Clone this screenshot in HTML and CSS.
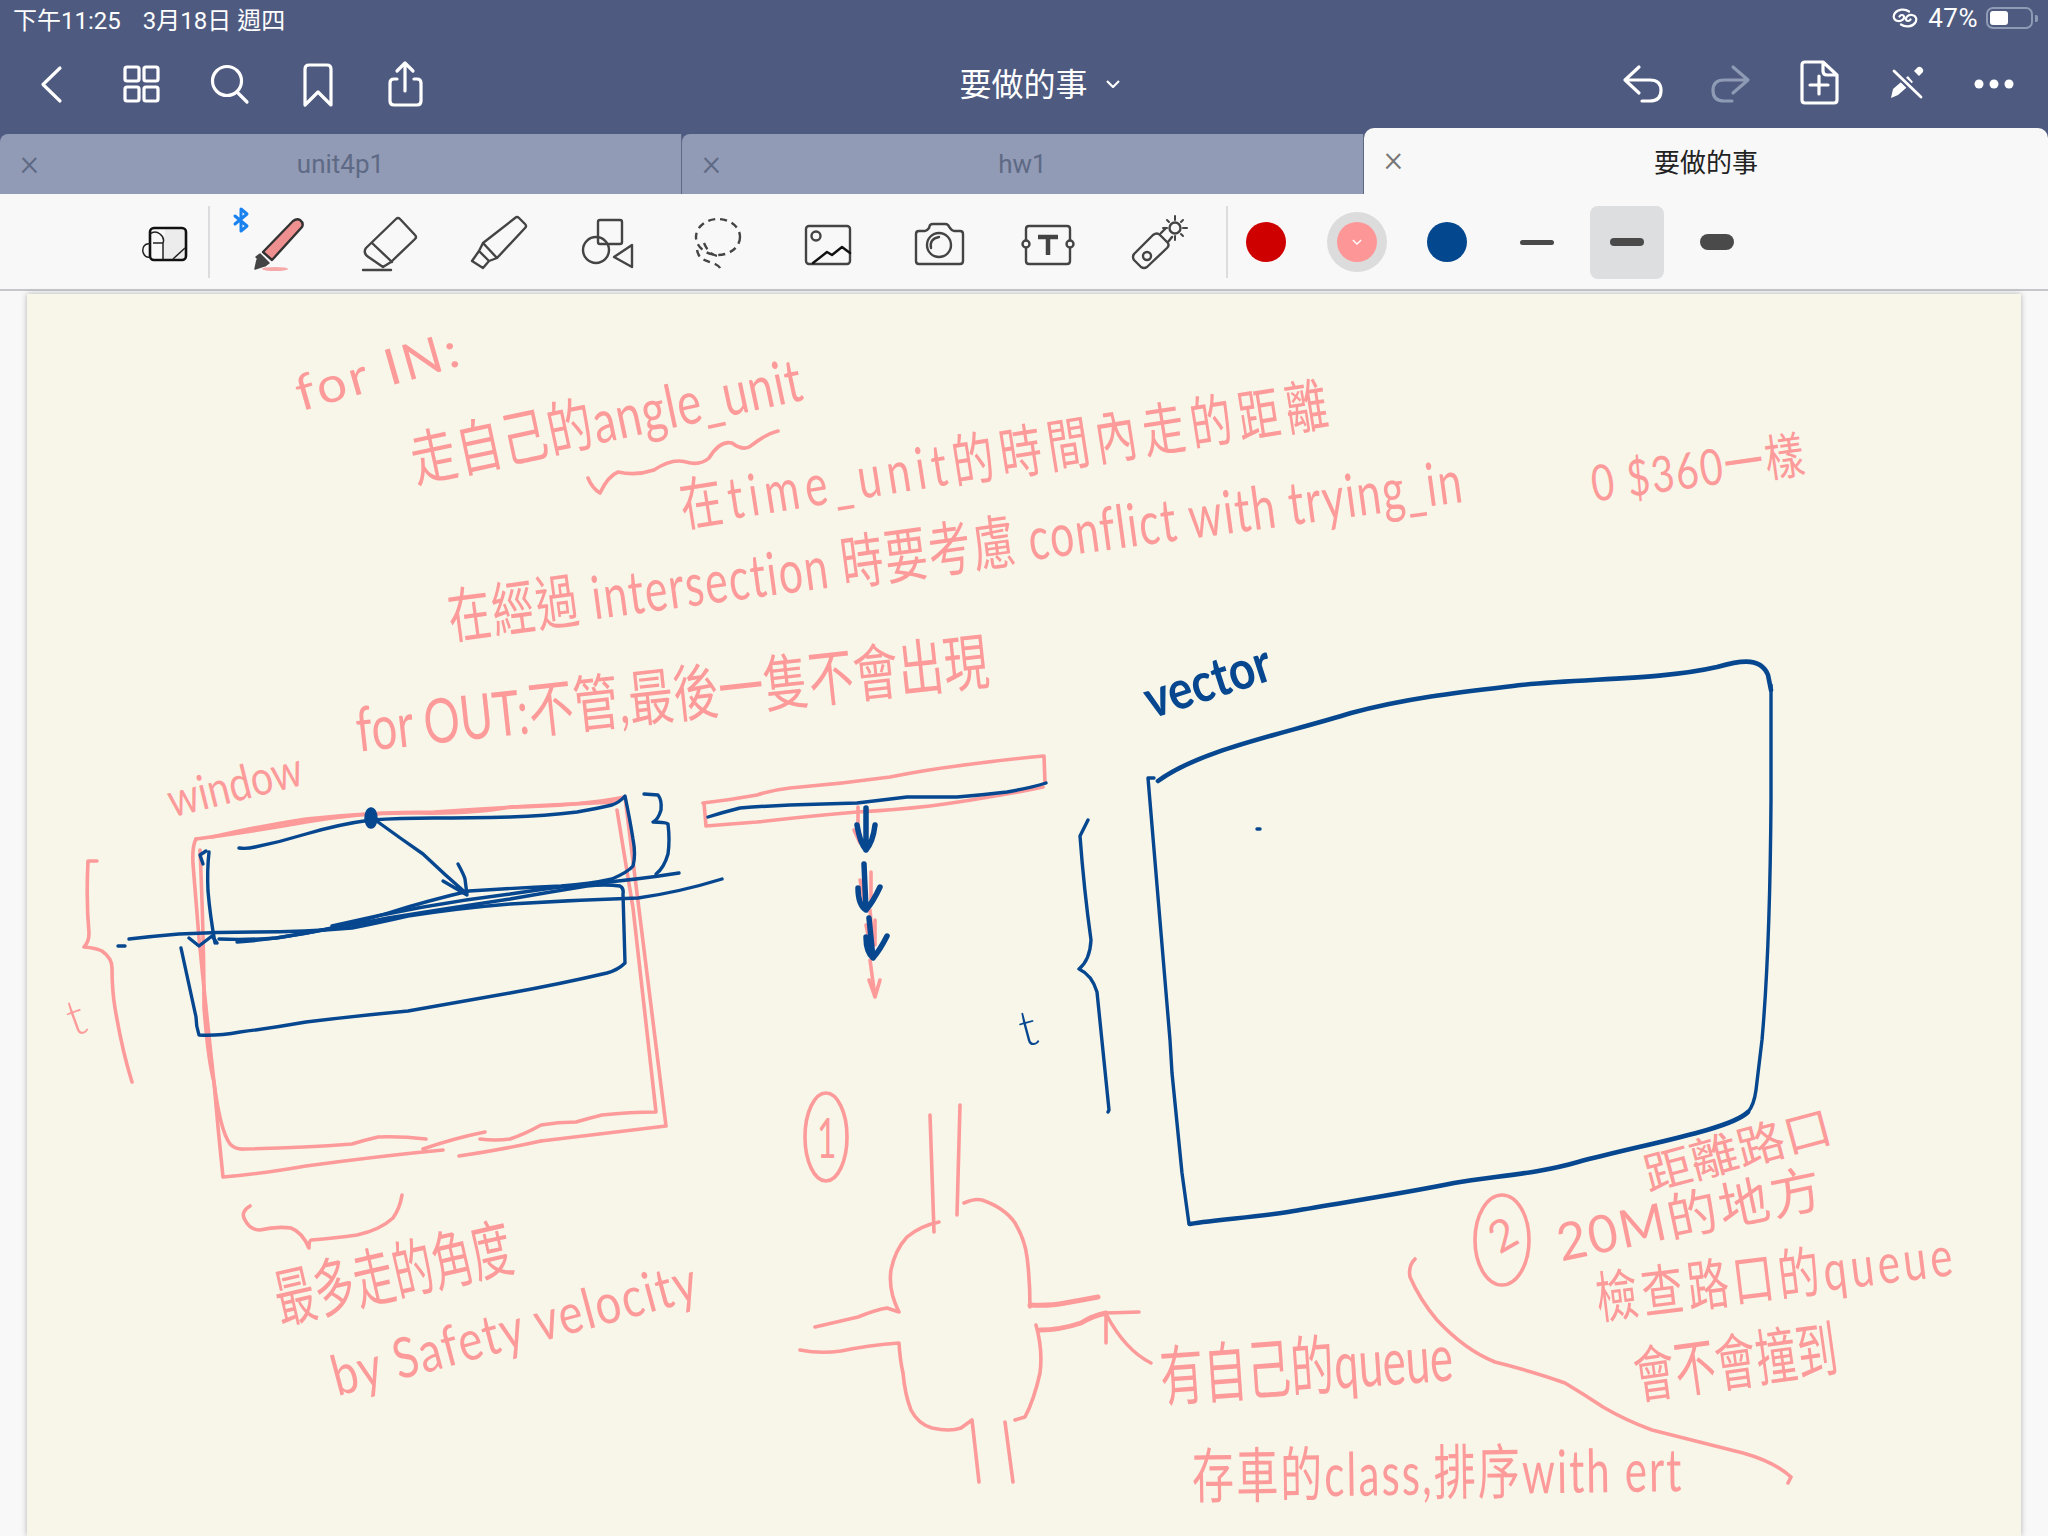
FILE: index.html
```html
<!DOCTYPE html>
<html lang="zh-Hant">
<head>
<meta charset="utf-8">
<title>要做的事</title>
<link rel="stylesheet" href="styles.css">
</head>
<body>
<div class="app">
  <header class="chrome">
    <div class="status">
      <div class="status-left"><span>下午11:25</span><span>3月18日 週四</span></div>
      <div class="status-right">
        <svg class="link-icon" viewBox="0 0 26 20"><path d="M17 3.500C13 .5 6 1 3 5c-2.600 3.500-1 7.500 3 8 3.500.4 6.500-2 6-4.500-.4-2-3.500-2-4.500 0M9 16.500c4 3 11 2.500 14-1.500 2.600-3.500 1-7.500-3-8-3.500-.4-6.500 2-6 4.500.4 2 3.500 2 4.500 0"/></svg>
        <span class="battery-pct">47%</span>
        <span class="battery"><span class="battery-fill"></span></span>
        <span class="battery-nub"></span>
      </div>
    </div>
    <nav class="nav">
      <div class="nav-group nav-group-left">
        <button class="nav-btn"><svg viewBox="21 54 60 60"><path d="M60 68 43 84.500 60 101"/></svg></button>
        <button class="nav-btn"><svg viewBox="110 54 60 60"><rect x="125" y="67" width="14" height="14" rx="2"/><rect x="144" y="67" width="14" height="14" rx="2"/><rect x="125" y="87" width="14" height="14" rx="2"/><rect x="144" y="87" width="14" height="14" rx="2"/></svg></button>
        <button class="nav-btn"><svg viewBox="199 54 60 60"><circle cx="227" cy="81" r="14.500"/><path d="M237 92 247 102"/></svg></button>
        <button class="nav-btn"><svg viewBox="288 54 60 60"><path d="M305 105V69q0-4 4-4h18q4 0 4 4v36l-13-13z"/></svg></button>
        <button class="nav-btn"><svg viewBox="377 54 60 60"><path d="M397 79h-3q-4 0-4 4v18q0 4 4 4h23q4 0 4-4V83q0-4-4-4h-3M405 91V64M397 71l8-8 8 8"/></svg></button>
      </div>
      <div class="doc-title"><span>要做的事</span><svg class="title-chevron" viewBox="0 0 14 8"><path d="M1 1l6 6 6-6"/></svg></div>
      <div class="nav-group">
        <button class="nav-btn"><svg viewBox="1612 54 60 60"><path d="M1639 67 1625 80l14 13M1625 80h25q11 0 11 10.500t-11 10.500h-8"/></svg></button>
        <button class="nav-btn nav-btn-off"><svg viewBox="1700 54 60 60"><path d="M1733 67 1748 80l-15 13M1748 80h-24q-11 0-11 10.500t11 10.500h8"/></svg></button>
        <button class="nav-btn"><svg viewBox="1788 54 60 60"><path d="M1823 62h-18q-3 0-3 3v35q0 3 3 3h29q3 0 3-3V75zM1823 62v9q0 4 4 4h10M1819 76v18M1810 85h18"/></svg></button>
        <button class="nav-btn"><svg viewBox="1876 54 60 60"><path class="solid" d="M1891 98l2-9 15-13 5 6-15 13zM1914 71l4-4q2-1 4 1t1 4l-4 4z"/><path class="knock" d="M1894 71 1921 97"/><path class="cross" d="M1894 71 1921 97"/></svg></button>
        <button class="nav-btn"><svg viewBox="1964 54 60 60"><circle class="solid" cx="1979" cy="84" r="4.500"/><circle class="solid" cx="1994" cy="84" r="4.500"/><circle class="solid" cx="2009" cy="84" r="4.500"/></svg></button>
      </div>
    </nav>
    <div class="tabs">
      <div class="tab"><span class="tab-x">×</span><span>unit4p1</span></div>
      <div class="tab"><span class="tab-x">×</span><span>hw1</span></div>
      <div class="tab tab-active"><span class="tab-x">×</span><span>要做的事</span></div>
    </div>
  </header>

  <div class="tools">
    <div class="tool-select">
      <svg viewBox="135 212 60 60"><path class="fill-soft" d="M165 229h17q4 0 4 4v23q0 4-4 4h-19z"/><rect class="black" x="150" y="228" width="36" height="32" rx="4"/><path class="thin" d="M150 234q5-4 10 0t3 9v16M153 243h10M150 244c-5-1-8 3-7 8 1 4 4 6 7 5M173 259l12-11"/></svg>
    </div>
    <span class="tool-divider"></span>
    <div class="tool-group">
      <div class="tool"><svg viewBox="249 212 60 60"><path class="bt" d="M235 216l12 10-6 5v-22l6 5-12 10"/><ellipse class="pen-ink" cx="275" cy="269" rx="13" ry="2"/><path class="pen-body" d="M293 221q4-3 7-1 4 3 2 7l-30 33-9-8z"/><path class="pen-edge" d="M260 254l9 9-4 3-9-9zM257 260l-2 9 9-3z"/></svg></div>
      <div class="tool"><svg viewBox="359 212 60 60"><path d="M396 219q2-2 4 0l15 16q2 2 0 4l-24 23-8 5-16-11q-4-4-1-8zM372 243l20 19M363 270h28"/></svg></div>
      <div class="tool"><svg viewBox="469 212 60 60"><path d="M515 218q2-2 4 0l6 6q2 2 0 4l-28 30-14-15zM483 243l-4 8 10 10 8-3M479 251l-7 10 11 7 6-7"/></svg></div>
      <div class="tool"><svg viewBox="579 212 60 60"><rect x="598" y="220" width="24" height="24" rx="2"/><circle cx="596" cy="250" r="13"/><path d="M632 245v22l-18-10z"/></svg></div>
      <div class="tool"><svg viewBox="689 212 60 60"><ellipse class="dash" cx="718" cy="237" rx="22" ry="18"/><path class="dash" d="M704 243c3 7 7 12 14 13M697 250c2 10 8 10 18 14 4 2 5 3 6 6"/></svg></div>
      <div class="tool"><svg viewBox="799 212 60 60"><rect x="806" y="226" width="44" height="38" rx="3"/><circle cx="816" cy="236" r="4.500"/><path class="dark" d="M813 263l14-11 5 3 10-8 8 6"/></svg></div>
      <div class="tool"><svg viewBox="909 212 60 60"><path d="M919 231h6q2 0 4-3l1-3q1-1 3-1h12q2 0 3 1l2 3q2 3 4 3h6q3 0 3 3v27q0 3-3 3h-41q-3 0-3-3v-27q0-3 3-3z"/><circle cx="939" cy="245" r="12"/><path d="M931 248q-2-9 8-11"/></svg></div>
      <div class="tool"><svg viewBox="1019 212 60 60"><path d="M1026 240v-11q0-3 3-3h38q3 0 3 3v11M1026 248v13q0 3 3 3h38q3 0 3-3v-13"/><circle cx="1026" cy="244" r="3.500"/><circle cx="1070" cy="244" r="3.500"/><path class="t-mark" d="M1038 237h20M1048 237v18"/></svg></div>
      <div class="tool"><svg viewBox="1129 212 60 60"><path d="M1153 235q4-3 7 0l7 7q3 3 0 6l-20 19q-3 2-6 0l-7-7q-2-3 0-6zM1161 233l5-5M1168 242l4-5"/><circle cx="1147" cy="256" r="4"/><circle cx="1175" cy="228" r="5.500"/><path class="ray" d="M1175 216v4M1175 236v4M1163 228h4M1183 228h4M1167 220l2 2M1181 234l2 2M1183 220l-2 2"/></svg></div>
    </div>
    <span class="tool-divider tool-divider-2"></span>
    <div class="swatches">
      <span class="swatch"><span class="dot dot-red"></span></span>
      <span class="swatch swatch-on"><span class="dot dot-pink"><svg viewBox="0 0 12 7"><path d="M1 1l5 5 5-5"/></svg></span></span>
      <span class="swatch"><span class="dot dot-blue"></span></span>
    </div>
    <div class="widths">
      <span class="width"><span class="stroke stroke-1"></span></span>
      <span class="width width-on"><span class="stroke stroke-2"></span></span>
      <span class="width"><span class="stroke stroke-3"></span></span>
    </div>
  </div>

  <main class="sheet">
    <div class="page">
      <svg class="sketch" viewBox="27 294 1995 1242">
        <g class="pink">
          <path d="M588 478Q592 488 600 493Q608 476 618 472Q636 476 654 470Q672 458 686 462Q700 466 709 458Q720 440 732 443Q744 452 752 445Q766 434 778 431"/>
          <path d="M196 839Q250 832 306 822T418 813T510 807Q580 806 625 797L666 1126L541 1141"/>
          <path d="M459 1156Q500 1150 541 1141M443 1150Q380 1156 306 1166Q260 1174 223 1177Q218 1130 214 1082Q206 1010 199 938L193 864Q192 846 196 839"/>
          <path d="M212 837Q260 826 306 819Q370 812 434 812Q520 806 617 802M200 850Q204 940 204 1007Q208 1060 214 1082Q220 1130 230 1144Q236 1150 245 1149Q300 1148 352 1144Q365 1140 378 1137Q400 1136 426 1139M423 1149Q455 1138 485 1132M480 1139Q495 1141 510 1139Q525 1134 541 1125Q558 1122 576 1122Q590 1118 602 1115Q630 1112 656 1112L633 908L617 810"/>
          <path d="M97 861H88Q86 900 89 933Q89 942 84 947Q96 948 102 951Q112 958 112 968Q112 990 115 1008Q122 1050 132 1082"/>
          <path d="M250 1206Q240 1212 245 1220Q250 1230 260 1230Q276 1226 291 1228Q302 1232 309 1248Q309 1241 311 1240Q336 1238 357 1235Q380 1230 393 1218Q400 1208 402 1195"/>
          <path d="M703 803Q730 800 757 795Q772 790 790 788Q840 784 890 777Q925 770 957 766Q1000 760 1044 756L1045 783M704 803L706 826Q730 824 757 822Q810 816 857 812Q895 810 930 806Q960 802 983 798Q1015 793 1043 787"/>
          <path d="M858 807V836M854 830L860 843M864 870L866 905M860 880L864 900M871 872L871 900M870 910L873 945M866 925L870 945M875 920V945M870 960L875 997M869 980L875 997L880 980"/>
          <ellipse cx="826" cy="1137" rx="21" ry="44"/>
          <ellipse cx="1502" cy="1240" rx="27" ry="45"/>
          <path d="M930 1115L934 1232M960 1105L957 1215"/>
          <path d="M964 1203Q975 1198 982 1200Q1005 1208 1015 1223Q1025 1240 1027 1257Q1030 1280 1030 1307"/>
          <path d="M939 1222Q920 1226 907 1237Q895 1250 891 1270Q888 1290 899 1312L887 1308Q875 1310 858 1317L815 1327"/>
          <path d="M800 1350Q820 1354 841 1351Q870 1345 899 1343Q900 1360 903 1373Q905 1395 911 1410Q918 1424 932 1428Q950 1432 961 1428L972 1420L979 1482"/>
          <path d="M1005 1422L1013 1482M1015 1420L1025 1417Q1034 1400 1040 1373Q1043 1350 1036 1325"/>
          <path class="heavy" d="M1030 1305Q1050 1306 1065 1303Q1082 1300 1098 1297M1040 1330Q1060 1330 1081 1323Q1092 1316 1106 1313"/>
          <path d="M1106 1313L1139 1312M1106 1314L1106 1343M1106 1314Q1125 1350 1151 1363"/>
          <path d="M1415 1259Q1408 1266 1410 1277Q1420 1300 1437 1320Q1465 1350 1495 1362Q1535 1372 1565 1383Q1585 1395 1603 1407Q1625 1420 1652 1430Q1700 1442 1743 1453Q1775 1462 1791 1477L1788 1483"/>
        </g>
        <g class="blue">
          <path d="M239 848Q247 849 255 847Q280 842 306 834Q340 824 371 820Q400 818 434 818Q470 818 510 817Q545 816 577 812Q600 808 612 805Q620 802 625 796Q630 820 633 839Q636 855 633 866Q628 872 612 879Q590 884 561 886Q515 888 469 891Q430 900 388 913Q360 922 332 928Q305 934 276 938Q248 940 219 939"/>
          <path d="M209 852Q207 870 208 891Q210 915 215 943M206 851L200 855L203 864"/>
          <ellipse class="dotfill" cx="371" cy="818" rx="5" ry="9"/>
          <path d="M378 822Q400 838 423 854Q445 875 467 894M458 864Q464 875 465 879L467 895L443 881"/>
          <path d="M118 946H125M129 939Q155 936 179 934Q218 932 255 932Q305 932 352 928Q382 922 408 916Q460 908 510 904Q575 900 638 898Q680 892 722 879"/>
          <path d="M237 942Q270 940 306 933Q348 926 388 918Q450 908 510 899Q550 892 587 886Q605 884 620 886Q624 888 623 894L625 963Q618 970 607 973Q560 984 510 993Q460 1002 408 1011Q355 1016 306 1022Q272 1028 240 1032Q218 1036 199 1035Q196 1026 196 1017Q188 980 181 948"/>
          <path d="M332 926Q420 905 510 894Q548 888 587 884Q635 880 679 873M189 938L199 946L212 936L217 943"/>
          <path d="M644 794L658 795Q662 800 661 810Q658 820 653 822Q666 822 668 824Q670 840 668 854Q664 868 656 874"/>
          <path d="M708 817Q724 812 740 808Q765 806 790 805Q824 804 857 803Q882 800 907 797Q932 797 957 797Q982 795 1007 792Q1030 788 1046 783"/>
          <path class="heavy arrow" d="M866 808V850M857 825Q860 843 866 850Q873 842 875 825M864 864L866 910M858 888Q858 905 866 910Q873 902 880 887M869 918L873 958M866 937Q866 952 873 958Q880 950 887 936"/>
          <path class="heavy" d="M1158 781C1200 750 1280 735 1351 713C1410 697 1470 691 1521 685C1590 678 1660 680 1717 667C1735 662 1760 655 1768 675L1771 690M1748 1112C1730 1130 1640 1145 1578 1162C1537 1174 1495 1176 1454 1183C1400 1194 1340 1203 1288 1212C1250 1218 1220 1219 1190 1224"/>
          <path d="M1771 685V800Q1770 950 1762 1040L1756 1090Q1754 1105 1748 1112M1189 1224L1182 1173L1172 1073L1170 1040L1148 778H1154"/>
          <path d="M1088 820L1080 836Q1084 890 1091 940Q1090 960 1079 969Q1092 975 1097 992L1109 1110L1108 1112"/>
          <path d="M1257 829H1260"/>
        </g>
      </svg>
      <span class="ink ink-a">for IN:</span>
      <span class="ink ink-b">走自己的angle_unit</span>
      <span class="ink ink-c">在time_unit的時間內走的距離</span>
      <span class="ink ink-d">在經過 intersection 時要考慮 conflict with trying_in</span>
      <span class="ink ink-e">0 $360一樣</span>
      <span class="ink ink-f">for OUT:不管,最後一隻不會出現</span>
      <span class="ink ink-g">window</span>
      <span class="ink ink-h">vector</span>
      <span class="ink ink-i">t</span>
      <span class="ink ink-j">t</span>
      <span class="ink ink-k">最多走的角度</span>
      <span class="ink ink-l">by Safety velocity</span>
      <span class="ink ink-m">1</span>
      <span class="ink ink-m2">2</span>
      <span class="ink ink-n">距離路口</span>
      <span class="ink ink-o">20M的地方</span>
      <span class="ink ink-p">檢查路口的queue</span>
      <span class="ink ink-q">會不會撞到</span>
      <span class="ink ink-r">有自己的queue</span>
      <span class="ink ink-s">存車的class,排序with ert</span>
    </div>
  </main>
</div>
</body>
</html>
```

FILE: styles.css
```css
* { box-sizing: border-box; }
html, body { margin: 0; padding: 0; }
body { font-family: Roboto, "Noto Sans CJK TC", sans-serif; }
.app { width: 2048px; height: 1536px; display: flex; flex-direction: column; overflow: hidden; background: #f8f8f8; }

/* header */
.chrome { background: #4e5a7f; color: #fff; }
.status { height: 40px; display: flex; justify-content: space-between; align-items: center; padding: 0 10px 4px 13px; font-size: 24px; }
.status-left { display: flex; gap: 22px; }
.status-right { display: flex; align-items: center; gap: 7px; margin-top: 4px; margin-bottom: 4px; }
.battery-pct { font-size: 26px; letter-spacing: .5px; }
.link-icon { width: 26px; height: 20px; margin-right: 3px; fill: none; stroke: #fff; stroke-width: 2.2; stroke-linecap: round; }
.battery { width: 47px; height: 22px; border: 2px solid #8f9ab5; border-radius: 7px; padding: 2px; display: flex; margin-left: 1px; }
.battery-fill { width: 18px; background: #fff; border-radius: 3px; }
.battery-nub { width: 3px; height: 7px; background: #8f9ab5; border-radius: 0 2px 2px 0; margin-left: -5px; }

.nav { height: 88px; display: grid; grid-template-columns: 1fr auto 1fr; align-items: center; padding: 0 10px 0 7px; }
.nav-group { display: flex; }
.nav-group-left { gap: 1px; }
.nav-group:last-child { justify-content: flex-end; }
.nav-btn { width: 88px; height: 88px; padding: 0; border: 0; background: none; display: flex; align-items: center; justify-content: center; }
.nav-btn svg { width: 60px; height: 60px; fill: none; stroke: #fff; stroke-width: 3.2; stroke-linecap: round; stroke-linejoin: round; overflow: visible; }
.nav-btn .solid { fill: #fff; stroke: none; }
.nav-btn .knock { stroke: #4e5a7f; stroke-width: 7; }
.nav-btn .cross { stroke-width: 2.8; }
.nav-btn-off svg { stroke: #8f9ab5; }
.doc-title { display: flex; align-items: center; padding: 0 0 4px 34px; font-size: 32px; gap: 18px; }
.title-chevron { width: 14px; height: 8px; fill: none; stroke: #fff; stroke-width: 2.2; margin-top: 3px; }

.tabs { display: flex; height: 66px; align-items: flex-end; }
.tab { flex: 0 0 682px; height: 60px; background: #929bb5; color: #5e6a85; border-right: 1px solid #5e6a85; border-radius: 8px 0 0 0; display: grid; grid-template-columns: 1fr auto 1fr; align-items: center; font-size: 26px; padding-bottom: 1px; }
.tab-x { padding-left: 20px; font-size: 36px; font-weight: 300; line-height: 1; color: #5e6a85; justify-self: start; margin-bottom: 2px; }
.tab-active { flex: 1; height: 66px; background: #f8f8f8; color: #222; border: 0; border-radius: 10px 10px 0 0; padding-bottom: 2px; }
.tab-active .tab-x { color: #777; }

/* tool row */
.tools { height: 97px; flex: none; background: #f8f8f8; border-bottom: 2px solid #c6c7ca; display: flex; align-items: center; padding: 1px 0 0 120px; }
.tool-select { width: 90px; height: 60px; display: flex; justify-content: center; }
.tool-select svg { width: 60px; height: 60px; fill: none; }
.fill-soft { fill: #ececec; }
.black { stroke: #111; stroke-width: 2.6; }
.thin { stroke: #222; stroke-width: 1.5; }
.tool-divider { width: 2px; height: 72px; background: #dcdcde; margin-left: -2px; }
.tool-group { display: flex; margin-left: 14px; }
.tool { width: 110px; height: 60px; display: flex; justify-content: center; }
.tool svg { width: 60px; height: 60px; fill: none; stroke: #444; stroke-width: 2.4; stroke-linecap: round; stroke-linejoin: round; overflow: visible; }
.tool .bt { stroke: #1a82f0; stroke-width: 3; }
.tool .pen-ink { fill: #f7a9a9; stroke: none; }
.tool .pen-body { fill: #ee9090; stroke: #333; stroke-width: 2.4; }
.tool .pen-edge { fill: #444; stroke: #444; stroke-width: 1.5; }
.tool .dash { stroke-dasharray: 7 5; stroke-linecap: butt; }
.tool .dark { stroke: #111; }
.tool .t-mark { stroke-width: 4.5; stroke-linecap: butt; }
.tool .ray { stroke-width: 2; }
.tool-divider-2 { margin-left: 12px; }
.swatches { display: flex; gap: 30.5px; margin-left: 8px; }
.swatch { width: 60px; height: 60px; border-radius: 50%; display: flex; align-items: center; justify-content: center; }
.swatch-on { background: #dcdcdc; }
.dot { width: 40px; height: 40px; border-radius: 50%; display: flex; align-items: center; justify-content: center; }
.dot svg { width: 10px; height: 6px; fill: none; stroke: #fff; stroke-width: 1.6; }
.dot-red { background: #cf0000; }
.dot-pink { background: #fd9696; }
.dot-blue { background: #03478f; }
.widths { display: flex; gap: 16px; margin-left: 23px; }
.width { width: 74px; height: 73px; border-radius: 8px; display: flex; align-items: center; justify-content: center; }
.width-on { background: #dddee0; }
.stroke { width: 34px; background: #4a4a4a; border-radius: 8px; }
.stroke-1 { height: 5px; }
.stroke-2 { height: 8px; }
.stroke-3 { height: 16px; }

/* page */
.sheet { flex: 1; min-height: 0; padding: 3px 27px 0 27px; display: flex; background: #f8f8f8; }
.page { flex: 1; position: relative; background: #f8f6e9; box-shadow: 0 0 6px rgba(0, 0, 0, .28); overflow: hidden; }
.sketch { position: absolute; left: 0; top: 0; width: 1995px; height: 1242px; fill: none; stroke-linecap: round; stroke-linejoin: round; }
.pink { stroke: #fd9a9a; stroke-width: 3.6; }
.blue { stroke: #06478f; stroke-width: 3.4; }
.pink .heavy { stroke-width: 5; }
.blue .heavy { stroke-width: 4.6; }
.blue .arrow { stroke-width: 5.5; }
.dotfill { fill: #06478f; }

.ink { position: absolute; white-space: pre; line-height: 1; transform-origin: 0 50%; color: #fd9a9a; font-family: Lato, "Noto Sans CJK TC", sans-serif; font-weight: 400; }
.ink-a { left: 269px; top: 74px; font-size: 50px; letter-spacing: 3px; transform: rotate(-16deg) scaleX(1.06); }
.ink-b { left: 384px; top: 136px; font-size: 60px; letter-spacing: 1px; transform: rotate(-12deg) scaleX(.76); }
.ink-c { left: 653px; top: 182px; font-size: 58px; letter-spacing: 8px; transform: rotate(-9deg) scaleX(.73); }
.ink-d { left: 421px; top: 292px; font-size: 60px; letter-spacing: 2px; transform: rotate(-7.7deg) scaleX(.712); }
.ink-e { left: 1564px; top: 164px; font-size: 50px; letter-spacing: 2px; transform: rotate(-8deg) scaleX(.79); }
.ink-f { left: 329px; top: 403px; font-size: 62px; transform: rotate(-6.2deg) scaleX(.73); }
.ink-g { left: 141px; top: 482px; font-size: 48px; transform: rotate(-14deg) scaleX(.82); }
.ink-h { left: 1118px; top: 379px; font-size: 54px; font-weight: 700; color: #06478f; transform: rotate(-18deg) scaleX(.85); }
.ink-i { left: 40px; top: 700px; font-size: 50px; font-weight: 300; transform: rotate(-20deg); }
.ink-j { left: 992px; top: 710px; font-size: 50px; font-weight: 300; color: #06478f; transform: rotate(-15deg); }
.ink-k { left: 248px; top: 974px; font-size: 64px; transform: rotate(-13deg) scaleX(.63); }
.ink-l { left: 305px; top: 1054px; font-size: 56px; letter-spacing: 2px; transform: rotate(-15deg) scaleX(.81); }
.ink-m { left: 790px; top: 815px; font-size: 56px; transform: scaleX(.6); }
.ink-m2 { left: 1464px; top: 924px; font-size: 44px; transform: rotate(-30deg); }
.ink-n { left: 1617px; top: 858px; font-size: 46px; transform: rotate(-15deg) scaleX(1.05); }
.ink-o { left: 1530px; top: 922px; font-size: 52px; letter-spacing: 2px; transform: rotate(-12deg) scaleX(.98); }
.ink-p { left: 1569px; top: 976px; font-size: 56px; letter-spacing: 5px; transform: rotate(-7deg) scaleX(.75); }
.ink-q { left: 1607px; top: 1050px; font-size: 62px; transform: rotate(-8deg) scaleX(.66); }
.ink-r { left: 1133px; top: 1049px; font-size: 66px; transform: rotate(-4deg) scaleX(.66); }
.ink-s { left: 1165px; top: 1151px; font-size: 60px; letter-spacing: 3px; transform: rotate(-.8deg) scaleX(.7); }
```
